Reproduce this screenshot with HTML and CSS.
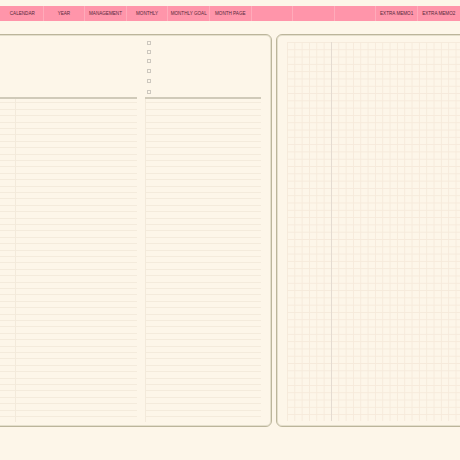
FILE: index.html
```html
<!DOCTYPE html>
<html>
<head>
<meta charset="utf-8">
<link rel="stylesheet" href="styles.css">
</head>
<body>
<nav class="tabs">
  <div class="tab">CALENDAR</div>
  <div class="tab">YEAR</div>
  <div class="tab">MANAGEMENT</div>
  <div class="tab">MONTHLY</div>
  <div class="tab">MONTHLY GOAL</div>
  <div class="tab">MONTH PAGE</div>
  <div class="tab"></div>
  <div class="tab"></div>
  <div class="tab"></div>
  <div class="tab">EXTRA MEMO1</div>
  <div class="tab">EXTRA MEMO2</div>
</nav>
<div class="viewport">
  <main class="spread">
    <section class="page page-left">
      <div class="top top-a"></div>
      <div class="top top-b">
        <span class="box"></span>
        <span class="box"></span>
        <span class="box"></span>
        <span class="box box-gap"></span>
        <span class="box box-gap"></span>
        <span class="box box-gap"></span>
      </div>
      <div class="ruled ruled-a"></div>
      <div class="ruled ruled-b"></div>
    </section>
    <section class="page page-right">
      <div class="grid"></div>
    </section>
  </main>
</div>
</body>
</html>
```
FILE: styles.css
```css
html, body {
  margin: 0;
  padding: 0;
  background: #fdf6e9;
  overflow: hidden;
  width: 460px;
  height: 460px;
}

.tabs {
  margin-top: 6px;
  height: 15px;
  background: #ff95aa;
  display: grid;
  grid-template-columns: repeat(11, 41.6px);
  padding-left: 2px;
  box-sizing: border-box;
  overflow: hidden;
}

.tab {
  display: flex;
  align-items: center;
  justify-content: center;
  font-family: "Liberation Sans", Arial, sans-serif;
  font-size: 4.6px;
  color: #55283a;
  border-right: 1px solid #ffabba;
  white-space: nowrap;
}

.tab:last-child {
  border-right: none;
}

.viewport {
  width: 460px;
  overflow: hidden;
  margin-top: 13px;
}

.spread {
  display: flex;
  gap: 4px;
  margin-left: -40px;
  height: 393px;
}

.page {
  box-sizing: border-box;
  height: 393px;
  background: #fdf6e9;
  border: 1.5px solid #bcb59b;
  border-radius: 6px;
  box-shadow: inset 0 0 0 1px #e4dfcc;
  flex: none;
}

.page-left {
  width: 312px;
  padding: 0 9.5px 0 38.5px;
  display: grid;
  grid-template-columns: 137px 116px;
  grid-template-rows: 61.5px 325px;
  column-gap: 8px;
}

.top-b {
  display: flex;
  flex-direction: column;
  padding: 5.5px 0 0 2px;
  gap: 5px;
}

.box {
  width: 2px;
  height: 2px;
  border: 1px solid #cdc8bf;
  display: block;
}

.box-gap {
  margin-top: 1.4px;
}

.ruled {
  border-top: 2px solid #d0cab9;
  height: 323px;
}

.ruled-a {
  background-image:
    linear-gradient(90deg, transparent 15px, #f3eadb 15px, #f3eadb 16px, transparent 16px),
    repeating-linear-gradient(180deg,
      transparent 0, transparent 3.5px,
      #f4ebdc 3.5px, #f4ebdc 4.5px,
      transparent 4.5px, transparent 6.4px);
}

.ruled-b {
  background-image:
    linear-gradient(90deg, #f3eadb 0, #f3eadb 1px, transparent 1px),
    repeating-linear-gradient(180deg,
      transparent 0, transparent 3.5px,
      #f4ebdc 3.5px, #f4ebdc 4.5px,
      transparent 4.5px, transparent 6.4px);
}

.page-right {
  width: 300px;
  padding: 6.5px 0 4px 9.5px;
}

.grid {
  height: 379px;
  width: 280px;
  background-image:
    linear-gradient(90deg, transparent 44px, #e4dbd1 44px, #e4dbd1 45.5px, transparent 45.5px),
    linear-gradient(90deg, #f6eadb 1px, transparent 1px),
    linear-gradient(180deg, #f6eadb 1px, transparent 1px);
  background-size: 100% 100%, 7.33px 7.3px, 7.33px 7.3px;
  background-repeat: no-repeat, repeat, repeat;
}
```
